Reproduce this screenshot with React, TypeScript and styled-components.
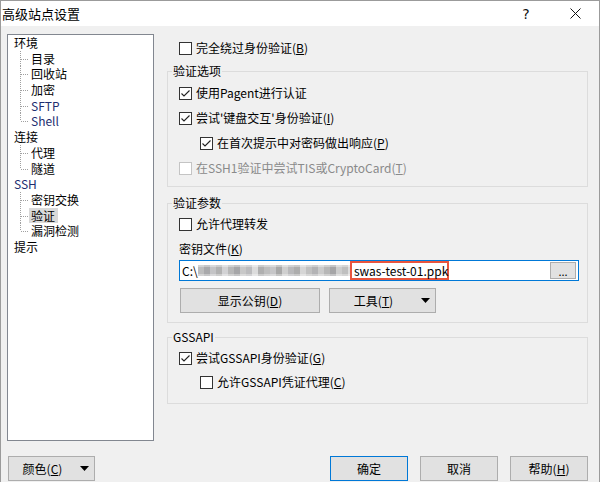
import React from "react";
import styled, { createGlobalStyle } from "styled-components";

const GlobalStyle = createGlobalStyle`
  html, body { margin: 0; padding: 0; background: #f0f0f0; }
  body {
    font-family: "Noto Sans CJK SC", "Noto Sans", sans-serif;
    font-size: 12px;
    color: #000;
  }
  * { box-sizing: border-box; }
`;

const Window = styled.div`
  width: 600px;
  height: 482px;
  overflow: hidden;
  background: #f0f0f0;
  border: 1px solid #9b9b9b;
  border-bottom: none;
  display: flex;
  flex-direction: column;
`;

const TitleBar = styled.div`
  height: 25px;
  flex: none;
  background: #fff;
  display: flex;
  align-items: center;
`;

const Title = styled.div`
  flex: 1;
  padding-left: 1px;
  font-size: 13px;
  line-height: 25px;
  white-space: nowrap;
`;

const CaptionButton = styled.div<{ $w: number }>`
  width: ${(p) => p.$w}px;
  height: 25px;
  display: flex;
  align-items: center;
  justify-content: center;
  font-family: "DejaVu Sans", sans-serif;
  font-size: 14px;
  color: #111;
`;

const Body = styled.div`
  flex: 1;
  display: flex;
  flex-direction: column;
  padding: 8px 11px 0 6px;
`;

const Main = styled.div`
  display: flex;
  height: 407px;
  flex: none;
`;

const Tree = styled.div`
  width: 147px;
  height: 407px;
  flex: none;
  background: #fff;
  border: 1px solid #828790;
  padding-left: 6px;
`;

const TreeLabel = styled.div<{ $latin?: boolean }>`
  height: 15.7px;
  line-height: 15.7px;
  white-space: nowrap;
  color: ${(p) => (p.$latin ? "#1e2e70" : "#000")};
`;

const ChildList = styled.div``;

const dotsV = "repeating-linear-gradient(to bottom, #a0a0a0 0 1px, transparent 1px 2px)";
const dotsH = "repeating-linear-gradient(to right, #a0a0a0 0 1px, transparent 1px 2px)";

const ChildItem = styled.div<{ $last?: boolean; $latin?: boolean }>`
  position: relative;
  height: 15.7px;
  line-height: 15.7px;
  padding-left: 17px;
  white-space: nowrap;
  color: ${(p) => (p.$latin ? "#1e2e70" : "#000")};
  &::before {
    content: "";
    position: absolute;
    left: 6px;
    top: 0;
    width: 1px;
    height: ${(p) => (p.$last ? "8px" : "100%")};
    background: ${dotsV};
  }
  &::after {
    content: "";
    position: absolute;
    left: 7px;
    top: 8px;
    width: 8px;
    height: 1px;
    background: ${dotsH};
  }
`;

const Selected = styled.span`
  display: inline-block;
  background: #d9d9d9;
  margin-left: -2px;
  padding: 0 3px 0 2px;
  line-height: 15px;
`;

const RightPanel = styled.div`
  width: 421px;
  margin-left: 13px;
  padding-top: 6px;
  display: flex;
  flex-direction: column;
`;

const CheckRow = styled.div<{ $indent?: boolean; $disabled?: boolean; $outer?: boolean }>`
  display: flex;
  align-items: center;
  height: 16px;
  line-height: 16px;
  white-space: nowrap;
  padding-left: ${(p) => (p.$indent ? 21 : 0) + (p.$outer ? 12 : 0)}px;
  color: ${(p) => (p.$disabled ? "#8a8a8a" : "#000")};
`;

const Box = styled.span<{ $disabled?: boolean }>`
  width: 13px;
  height: 13px;
  flex: none;
  margin-right: 4px;
  border: 1px solid ${(p) => (p.$disabled ? "#c4c4c4" : "#333")};
  background: #fff;
  display: flex;
  align-items: center;
  justify-content: center;
`;

const Group = styled.fieldset<{ $mt: number }>`
  margin: ${(p) => p.$mt}px 0 0 0;
  padding: 0;
  min-width: 0;
  border: 1px solid #dcdcdc;
`;

const Legend = styled.legend`
  margin-left: 4px;
  padding: 0 1px;
  line-height: 16px;
  font-size: 12px;
`;

const GroupBody = styled.div<{ $pt: number; $pb: number; $gap: number }>`
  display: flex;
  flex-direction: column;
  gap: ${(p) => p.$gap}px;
  padding: ${(p) => p.$pt}px 8px ${(p) => p.$pb}px 11px;
`;

const FieldLabel = styled.div`
  margin-top: 9px;
  height: 16px;
  line-height: 16px;
`;

const KeyInput = styled.div`
  margin-top: 3px;
  width: 400px;
  height: 21px;
  border: 1px solid #0078d7;
  background: #fff;
  display: flex;
  align-items: stretch;
  padding: 0 2px;
  line-height: 19px;
  white-space: nowrap;
`;

const PathPrefix = styled.span`
  width: 16px;
  flex: none;
`;

const blurColors = [
  "#bdbdbd", "#a9a9ab", "#c4c4c6", "#b2b2b2", "#d2d2d4", "#b8b8b8", "#a6a6a8",
  "#c8c8c8", "#bcbcbe", "#dcdcdc", "#afafaf", "#bebebe", "#c6c6c8", "#a8a8a8",
  "#cfcfcf", "#b9b9bb", "#adadad", "#d6d6d6", "#c1c1c1", "#b3b3b5", "#cbcbcb",
  "#b7b7b7", "#a5a5a7", "#cdcdcd", "#bfbfbf",
];
const blurGradient = `linear-gradient(to right, ${blurColors
  .map((c, i) => `${c} ${i * 6}px ${(i + 1) * 6}px`)
  .join(", ")}, #dedede 150px 152px)`;

const Blur = styled.span`
  width: 152px;
  height: 11px;
  flex: none;
  align-self: center;
  background: linear-gradient(to bottom, rgba(255,255,255,0.35) 0 2px, transparent 2px 9px, rgba(255,255,255,0.35) 9px 11px),
    ${blurGradient};
`;

const Highlight = styled.span`
  width: 99px;
  flex: none;
  border: 2px solid #e8553e;
  padding: 0 2px;
  line-height: 15px;
`;

const BrowseButton = styled.span`
  margin-left: auto;
  align-self: center;
  width: 26px;
  height: 17px;
  border: 1px solid #adadad;
  background: #e1e1e1;
  display: flex;
  justify-content: center;
  line-height: 17px;
  font-size: 11px;
`;

const ButtonRow = styled.div`
  margin-top: 7px;
  margin-left: 1px;
  display: flex;
  gap: 9px;
`;

const PushButton = styled.div<{ $w: number; $default?: boolean }>`
  width: ${(p) => p.$w}px;
  height: 25px;
  flex: none;
  border: 1px solid ${(p) => (p.$default ? "#0078d7" : "#adadad")};
  background: #e1e1e1;
  display: flex;
  align-items: center;
  justify-content: center;
  white-space: nowrap;
  line-height: 16px;
`;

const SplitButton = styled.div<{ $w: number }>`
  width: ${(p) => p.$w}px;
  height: 25px;
  flex: none;
  border: 1px solid #adadad;
  background: #e1e1e1;
  display: flex;
  align-items: center;
  padding-right: 5px;
  white-space: nowrap;
  line-height: 16px;
`;

const SplitLabel = styled.span`
  flex: 1;
  text-align: center;
`;

const Arrow = styled.svg`
  margin-left: 4px;
  flex: none;
`;

const Footer = styled.div`
  margin-top: 15px;
  display: flex;
  align-items: center;
`;

const FooterLeft = styled.div`
  margin-left: 1px;
`;

const FooterActions = styled.div`
  margin-left: auto;
  display: flex;
  gap: 12px;
`;

const Check = ({ checked }: { checked?: boolean }) =>
  checked ? (
    <svg width="11" height="11" viewBox="0 0 11 11">
      <polyline points="1.5,5.5 4,8 9.5,2.5" fill="none" stroke="#222" strokeWidth="1.1" />
    </svg>
  ) : null;

const DownArrow = () => (
  <Arrow width="9" height="5" viewBox="0 0 9 5">
    <polygon points="0,0 9,0 4.5,5" fill="#000" />
  </Arrow>
);

type CheckProps = {
  checked?: boolean;
  indent?: boolean;
  disabled?: boolean;
  outer?: boolean;
  children: React.ReactNode;
};

const CheckItem = ({ checked, indent, disabled, outer, children }: CheckProps) => (
  <CheckRow $indent={indent} $disabled={disabled} $outer={outer}>
    <Box $disabled={disabled}>
      <Check checked={checked} />
    </Box>
    <span>{children}</span>
  </CheckRow>
);

const treeData: { label: string; latin?: boolean; children: { label: string; latin?: boolean; selected?: boolean }[] }[] = [
  {
    label: "环境",
    children: [
      { label: "目录" },
      { label: "回收站" },
      { label: "加密" },
      { label: "SFTP", latin: true },
      { label: "Shell", latin: true },
    ],
  },
  { label: "连接", children: [{ label: "代理" }, { label: "隧道" }] },
  {
    label: "SSH",
    latin: true,
    children: [{ label: "密钥交换" }, { label: "验证", selected: true }, { label: "漏洞检测" }],
  },
  { label: "提示", children: [] },
];

export default function App() {
  return (
    <>
      <GlobalStyle />
      <Window>
        <TitleBar>
          <Title>高级站点设置</Title>
          <CaptionButton $w={50}>?</CaptionButton>
          <CaptionButton $w={48}>
            <svg width="11" height="11" viewBox="0 0 11 11">
              <line x1="0.5" y1="0.5" x2="10.5" y2="10.5" stroke="#111" strokeWidth="1" />
              <line x1="10.5" y1="0.5" x2="0.5" y2="10.5" stroke="#111" strokeWidth="1" />
            </svg>
          </CaptionButton>
        </TitleBar>
        <Body>
          <Main>
            <Tree>
              {treeData.map((g) => (
                <div key={g.label}>
                  <TreeLabel $latin={g.latin}>{g.label}</TreeLabel>
                  <ChildList>
                    {g.children.map((c, i) => (
                      <ChildItem key={c.label} $last={i === g.children.length - 1} $latin={c.latin}>
                        {c.selected ? <Selected>{c.label}</Selected> : c.label}
                      </ChildItem>
                    ))}
                  </ChildList>
                </div>
              ))}
            </Tree>
            <RightPanel>
              <CheckItem outer>
                完全绕过身份验证(<u>B</u>)
              </CheckItem>
              <Group $mt={7}>
                <Legend>验证选项</Legend>
                <GroupBody $pt={6} $pb={10} $gap={9}>
                  <CheckItem checked>使用Pagent进行认证</CheckItem>
                  <CheckItem checked>
                    尝试'键盘交互'身份验证(<u>I</u>)
                  </CheckItem>
                  <CheckItem checked indent>
                    在首次提示中对密码做出响应(<u>P</u>)
                  </CheckItem>
                  <CheckItem disabled>
                    在SSH1验证中尝试TIS或CryptoCard(<u>T</u>)
                  </CheckItem>
                </GroupBody>
              </Group>
              <Group $mt={8}>
                <Legend>验证参数</Legend>
                <GroupBody $pt={5} $pb={9} $gap={0}>
                  <CheckItem>允许代理转发</CheckItem>
                  <FieldLabel>
                    密钥文件(<u>K</u>)
                  </FieldLabel>
                  <KeyInput>
                    <PathPrefix>C:\</PathPrefix>
                    <Blur />
                    <Highlight>swas-test-01.ppk</Highlight>
                    <BrowseButton>...</BrowseButton>
                  </KeyInput>
                  <ButtonRow>
                    <PushButton $w={140}>
                      显示公钥(<u>D</u>)
                    </PushButton>
                    <SplitButton $w={107}>
                      <SplitLabel>
                        工具(<u>T</u>)
                      </SplitLabel>
                      <DownArrow />
                    </SplitButton>
                  </ButtonRow>
                </GroupBody>
              </Group>
              <Group $mt={6}>
                <Legend>GSSAPI</Legend>
                <GroupBody $pt={5} $pb={13} $gap={8}>
                  <CheckItem checked>
                    尝试GSSAPI身份验证(<u>G</u>)
                  </CheckItem>
                  <CheckItem indent>
                    允许GSSAPI凭证代理(<u>C</u>)
                  </CheckItem>
                </GroupBody>
              </Group>
            </RightPanel>
          </Main>
          <Footer>
            <FooterLeft>
              <SplitButton $w={87}>
                <SplitLabel>
                  颜色(<u>C</u>)
                </SplitLabel>
                <DownArrow />
              </SplitButton>
            </FooterLeft>
            <FooterActions>
              <PushButton $w={78} $default>
                确定
              </PushButton>
              <PushButton $w={78}>取消</PushButton>
              <PushButton $w={78}>
                帮助(<u>H</u>)
              </PushButton>
            </FooterActions>
          </Footer>
        </Body>
      </Window>
    </>
  );
}
